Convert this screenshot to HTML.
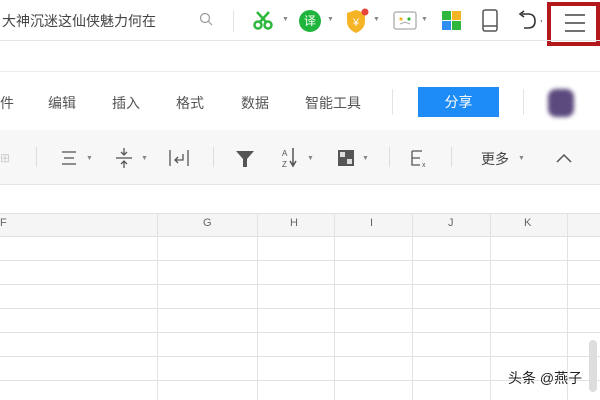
<!DOCTYPE html>
<html><head><meta charset="utf-8"><style>
*{margin:0;padding:0;box-sizing:border-box}
body{width:600px;height:400px;overflow:hidden;background:#fff;font-family:"Liberation Sans","Noto Sans CJK SC",sans-serif;position:relative;color:#333}
.a{position:absolute}
.t{font-size:14px;color:#444}
.m{font-size:14px;color:#555;top:93px}
.dd{font-size:7px;color:#888}
.vl{position:absolute;width:1px;background:#e2e2e2;top:213px;height:187px}
.hl{position:absolute;height:1px;background:#e2e2e2;left:0;width:600px}
.ch{position:absolute;top:217px;font-size:11px;color:#666}
</style></head><body>
<!-- top bar -->
<div class="a t" style="left:2px;top:11px;font-size:14px">大神沉迷这仙侠魅力何在</div>
<svg class="a" style="left:199px;top:12px" width="14" height="14"><circle cx="6" cy="6" r="4.5" fill="none" stroke="#999" stroke-width="1.2"/><line x1="9.5" y1="9.5" x2="13" y2="13" stroke="#999" stroke-width="1.2"/></svg>
<div class="a" style="left:233px;top:10px;width:1px;height:22px;background:#e3e3e3"></div>
<svg class="a" style="left:253px;top:10px" width="20" height="20"><circle cx="5" cy="15" r="3.5" fill="none" stroke="#2db83d" stroke-width="2.5"/><circle cx="15" cy="15" r="3.5" fill="none" stroke="#2db83d" stroke-width="2.5"/><line x1="4" y1="2" x2="14" y2="13" stroke="#2db83d" stroke-width="2.5"/><line x1="16" y1="2" x2="6" y2="13" stroke="#2db83d" stroke-width="2.5"/></svg>
<div class="a dd" style="left:282px;top:16px">▼</div>
<div class="a" style="left:299px;top:10px;width:22px;height:22px;border-radius:50%;background:#1fb53c;color:#fff;font-size:12px;text-align:center;line-height:22px">译</div>
<div class="a dd" style="left:327px;top:16px">▼</div>
<svg class="a" style="left:345px;top:8px" width="24" height="26"><path d="M2 5 L11 2 L20 5 L20 13 Q20 21 11 25 Q2 21 2 13Z" fill="#f5b326"/><text x="11" y="18" font-size="11" fill="#fff" text-anchor="middle" font-family="Liberation Sans">¥</text><circle cx="20" cy="4" r="3.5" fill="#e8453c"/></svg>
<div class="a dd" style="left:373px;top:16px">▼</div>
<svg class="a" style="left:393px;top:11px" width="24" height="20"><rect x="1" y="1" width="22" height="17" rx="2" fill="none" stroke="#aaa" stroke-width="1.3"/><circle cx="8" cy="8" r="1.6" fill="#f5b326"/><circle cx="16" cy="8" r="1.6" fill="#2db83d"/><path d="M7 13 L12 11 L17 13" fill="none" stroke="#aaa"/></svg>
<div class="a dd" style="left:421px;top:16px">▼</div>
<svg class="a" style="left:442px;top:11px" width="20" height="20"><rect x="0" y="0" width="9" height="9" fill="#2db83d"/><rect x="10" y="0" width="9" height="9" fill="#f5b326"/><rect x="0" y="10" width="9" height="9" fill="#2f8ff0"/><rect x="10" y="10" width="9" height="9" fill="#2db83d"/></svg>
<svg class="a" style="left:481px;top:9px" width="18" height="24"><rect x="2" y="1" width="14" height="21" rx="2" fill="none" stroke="#555" stroke-width="1.5"/><line x1="2" y1="17" x2="16" y2="17" stroke="#555" stroke-width="1.5"/></svg>
<svg class="a" style="left:518px;top:10px" width="24" height="22"><path d="M4 4 L10 4 Q17 4 17 11 Q17 18 10 18 L6 18" fill="none" stroke="#333" stroke-width="1.6"/><path d="M6 1 L2 4 L6 7" fill="none" stroke="#333" stroke-width="1.6"/><text x="21" y="14" font-size="7" fill="#888">▼</text></svg>
<div class="a" style="left:547px;top:2px;width:53px;height:44px;border:4px solid #b3191c"></div>
<svg class="a" style="left:564px;top:13px" width="22" height="20"><line x1="1" y1="2" x2="21" y2="2" stroke="#444" stroke-width="1.5"/><line x1="1" y1="10" x2="21" y2="10" stroke="#444" stroke-width="1.5"/><line x1="1" y1="18" x2="21" y2="18" stroke="#444" stroke-width="1.5"/></svg>
<div class="hl" style="top:40px;background:#e6e6e6"></div>
<div class="hl" style="top:71px;background:#ececec"></div>
<!-- menu -->
<div class="a m" style="left:0">件</div>
<div class="a m" style="left:48px">编辑</div>
<div class="a m" style="left:112px">插入</div>
<div class="a m" style="left:176px">格式</div>
<div class="a m" style="left:241px">数据</div>
<div class="a m" style="left:305px">智能工具</div>
<div class="a" style="left:392px;top:89px;width:1px;height:26px;background:#e3e3e3"></div>
<div class="a" style="left:418px;top:87px;width:81px;height:30px;background:#1e8cf6;color:#fff;font-size:14px;text-align:center;line-height:30px">分享</div>
<div class="a" style="left:523px;top:89px;width:1px;height:26px;background:#e3e3e3"></div>
<div class="a" style="left:548px;top:89px;width:26px;height:28px;border-radius:8px;background:#5c4a7e;filter:blur(2px)"></div>
<!-- toolbar -->
<div class="a" style="left:0;top:130px;width:600px;height:55px;background:#f7f7f7;border-bottom:1px solid #e6e6e6"></div>
<div class="a" style="left:0;top:151px;font-size:12px;color:#ccc">⊞</div>
<div class="a" style="left:36px;top:147px;width:1px;height:20px;background:#ddd"></div>
<svg class="a" style="left:60px;top:150px" width="20" height="16"><line x1="2" y1="2" x2="16" y2="2" stroke="#555" stroke-width="1.3"/><line x1="4" y1="8" x2="14" y2="8" stroke="#555" stroke-width="1.3"/><line x1="2" y1="14" x2="16" y2="14" stroke="#555" stroke-width="1.3"/></svg>
<div class="a dd" style="left:86px;top:155px">▼</div>
<svg class="a" style="left:114px;top:147px" width="20" height="22"><line x1="2" y1="11" x2="18" y2="11" stroke="#555" stroke-width="1.3"/><path d="M10 1 L10 8 M7 5 L10 8 L13 5 M10 21 L10 14 M7 17 L10 14 L13 17" fill="none" stroke="#555" stroke-width="1.3"/></svg>
<div class="a dd" style="left:141px;top:155px">▼</div>
<svg class="a" style="left:168px;top:149px" width="22" height="18"><line x1="2" y1="1" x2="2" y2="17" stroke="#555" stroke-width="1.3"/><line x1="20" y1="1" x2="20" y2="17" stroke="#555" stroke-width="1.3"/><path d="M15 5 L15 11 L7 11 M10 8 L7 11 L10 14" fill="none" stroke="#555" stroke-width="1.3"/></svg>
<div class="a" style="left:213px;top:147px;width:1px;height:20px;background:#ddd"></div>
<svg class="a" style="left:235px;top:150px" width="20" height="18"><path d="M1 1 L19 1 L12 9 L12 17 L8 17 L8 9Z" fill="#555"/></svg>
<svg class="a" style="left:282px;top:147px" width="26" height="22"><text x="0" y="9" font-size="8" fill="#555" font-family="Liberation Sans">A</text><text x="0" y="20" font-size="8" fill="#555" font-family="Liberation Sans">Z</text><path d="M11 1 L11 18 M8 14 L11 19 L14 14" fill="none" stroke="#555" stroke-width="1.5"/></svg>
<div class="a dd" style="left:307px;top:155px">▼</div>
<svg class="a" style="left:337px;top:149px" width="18" height="18"><rect x="1" y="1" width="16" height="16" fill="#555"/><rect x="3" y="3" width="5" height="5" fill="#ddd"/><rect x="10" y="10" width="5" height="5" fill="#ddd"/></svg>
<div class="a dd" style="left:362px;top:155px">▼</div>
<div class="a" style="left:389px;top:147px;width:1px;height:20px;background:#ddd"></div>
<svg class="a" style="left:410px;top:149px" width="20" height="20"><path d="M2 2 L12 2 M2 2 L2 16 L10 16 M2 9 L10 9" fill="none" stroke="#555" stroke-width="1.3"/><text x="12" y="18" font-size="7" fill="#555">x</text></svg>
<div class="a" style="left:451px;top:147px;width:1px;height:20px;background:#ddd"></div>
<div class="a" style="left:481px;top:149px;font-size:14px;color:#444">更多</div>
<div class="a dd" style="left:518px;top:155px">▼</div>
<svg class="a" style="left:555px;top:152px" width="18" height="12"><path d="M2 10 L9 3 L16 10" fill="none" stroke="#555" stroke-width="1.5"/></svg>
<!-- grid -->
<div class="a" style="left:0;top:213px;width:600px;height:23px;background:#f5f5f5"></div>
<div class="hl" style="top:213px"></div>
<div class="hl" style="top:236px"></div>
<div class="hl" style="top:260px"></div>
<div class="hl" style="top:284px"></div>
<div class="hl" style="top:308px"></div>
<div class="hl" style="top:332px"></div>
<div class="hl" style="top:356px"></div>
<div class="hl" style="top:380px"></div>
<div class="vl" style="left:157px"></div>
<div class="vl" style="left:257px"></div>
<div class="vl" style="left:334px"></div>
<div class="vl" style="left:412px"></div>
<div class="vl" style="left:490px"></div>
<div class="vl" style="left:567px"></div>
<div class="ch" style="left:0">F</div>
<div class="ch" style="left:203px">G</div>
<div class="ch" style="left:290px">H</div>
<div class="ch" style="left:370px">I</div>
<div class="ch" style="left:448px">J</div>
<div class="ch" style="left:524px">K</div>
<div class="a" style="left:589px;top:340px;width:8px;height:52px;border-radius:4px;background:#ddd"></div>
<div class="a" style="left:508px;top:368px;font-size:14px;color:#222;text-shadow:0 0 2px #fff">头条 @燕子</div>
</body></html>
